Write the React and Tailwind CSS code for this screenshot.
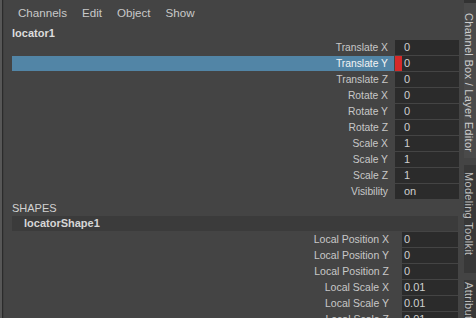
export default function App() {
  const channels = [
    ["Translate X", "0"],
    ["Translate Y", "0", true],
    ["Translate Z", "0"],
    ["Rotate X", "0"],
    ["Rotate Y", "0"],
    ["Rotate Z", "0"],
    ["Scale X", "1"],
    ["Scale Y", "1"],
    ["Scale Z", "1"],
    ["Visibility", "on"],
  ];
  const shapes = [
    ["Local Position X", "0"],
    ["Local Position Y", "0"],
    ["Local Position Z", "0"],
    ["Local Scale X", "0.01"],
    ["Local Scale Y", "0.01"],
    ["Local Scale Z", "0.01"],
  ];
  return (
    <div
      className="flex w-[476px] h-[318px] overflow-hidden bg-[#444444] text-[#c8c8c8]"
      style={{ fontFamily: '"Liberation Sans", Arial, sans-serif' }}
    >
      <div className="w-[2px] shrink-0 bg-[#575757]" />
      <div className="w-[1px] shrink-0 bg-[#2b2b2b]" />
      <div className="w-[1px] shrink-0 bg-[#3e3e3e]" />
      <div className="flex-1 flex flex-col min-w-0">
        <div className="h-[26px] shrink-0 flex items-center pl-[14px] gap-[15px] text-[11.6px] text-[#c9c9c9]">
          <span>Channels</span>
          <span>Edit</span>
          <span>Object</span>
          <span>Show</span>
        </div>
        <div className="h-[14px] shrink-0 flex items-center pl-[8px] text-[11px] font-bold text-[#dddddd]">
          locator1
        </div>
        {channels.map(([label, value, sel], i) => (
          <div key={i} className="h-[15px] shrink-0 mb-[1px] flex ml-[8px] mr-[5px] text-[10.3px]">
            <div
              className={
                "flex-1 flex items-center justify-end pr-[6px] mr-[1px] " +
                (sel ? "bg-[#5285a6] text-[#f4f4f4]" : "")
              }
            >
              {label}
            </div>
            <div className="w-[64px] relative flex items-center pl-[9px] bg-[#2b2b2b] text-[#cfcfcf] text-[11px]">
              {sel ? <div className="absolute left-0 top-0 w-[7px] h-[15px] bg-[#d52a2a]" /> : ""}
              {value}
            </div>
          </div>
        ))}
        <div className="h-[16px] shrink-0 flex items-center pl-[8px] text-[11px] text-[#d2d2d2]">
          SHAPES
        </div>
        <div className="h-[15px] shrink-0 mb-[1px] ml-[8px] mr-[6px] flex items-center pl-[12px] bg-[#3b3b3b] text-[11px] font-bold text-[#d6d6d6]">
          locatorShape1
        </div>
        {shapes.map(([label, value], i) => (
          <div key={i} className="h-[15px] shrink-0 mb-[1px] flex ml-[8px] mr-[6px] text-[10.5px]">
            <div className="flex-1 flex items-center justify-end pr-[13px]">{label}</div>
            <div className="w-[56px] flex items-center pl-[2px] bg-[#2b2b2b] text-[#cfcfcf] text-[11px]">
              {value}
            </div>
          </div>
        ))}
      </div>
      <div className="w-[12px] shrink-0 flex flex-col bg-[#3a3a3a]">
        <div className="h-[3px] shrink-0 bg-[#333333]" />
        <div className="h-[155px] shrink-0 bg-[#4a4a4a] pt-[10px] pr-[1px] leading-[12px] text-[11px] tracking-[0.3px] text-[#cdcdcd] [writing-mode:vertical-rl] whitespace-nowrap">
          Channel Box / Layer Editor
        </div>
        <div className="h-[7px] shrink-0 bg-[#444444]" />
        <div className="h-[108px] shrink-0 bg-[#383838] pt-[7px] pr-[1px] leading-[12px] text-[11px] tracking-[0.3px] text-[#bdbdbd] [writing-mode:vertical-rl] whitespace-nowrap">
          Modeling Toolkit
        </div>
        <div className="h-[7px] shrink-0 bg-[#444444]" />
        <div className="flex-1 bg-[#383838] pt-[2px] pr-[1px] leading-[12px] text-[11px] tracking-[0.3px] text-[#bdbdbd] [writing-mode:vertical-rl] whitespace-nowrap overflow-hidden">
          Attribute Editor
        </div>
      </div>
    </div>
  );
}
